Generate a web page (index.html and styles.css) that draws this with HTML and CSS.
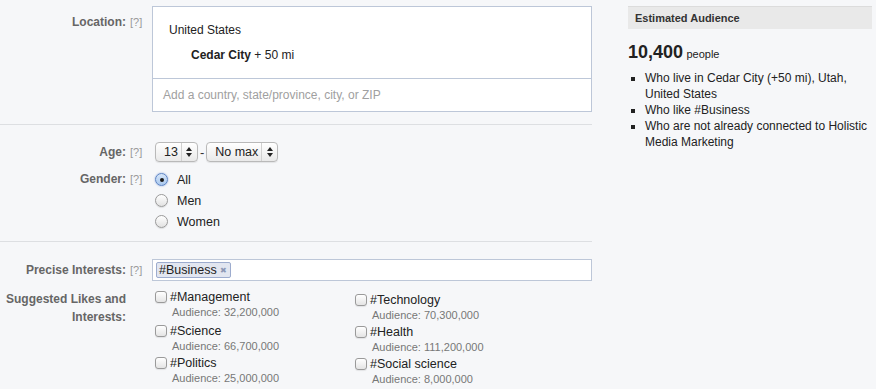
FILE: index.html
```html
<!DOCTYPE html>
<html lang="en">
<head>
  <meta charset="UTF-8" />
  <title>Audience Targeting</title>
  <link rel="stylesheet" href="styles.css">
</head>
<body>
  <div class="page">
    <div class="targeting">

      <!-- Location -->
      <div class="section section-location">
        <div class="row">
          <div class="label label-location">Location:</div>
          <div class="help help-location">[?]</div>
          <div class="control">
            <div class="location-box">
              <div class="location-list">
                <div class="country">United States</div>
                <div class="city"><b>Cedar City</b> + 50 mi</div>
              </div>
              <div class="location-add">Add a country, state/province, city, or ZIP</div>
            </div>
          </div>
        </div>
      </div>

      <!-- Age & Gender -->
      <div class="section section-demo">
        <div class="row row-age">
          <div class="label">Age:</div>
          <div class="help">[?]</div>
          <div class="control age-control">
            <span class="select">
              <span class="select-value">13</span>
              <span class="select-arrows"><svg width="6" height="10" viewBox="0 0 6 10"><path d="M3 0 L6 4 L0 4 Z M0 6 L6 6 L3 10 Z" fill="#222"/></svg></span>
            </span>
            <span class="dash">-</span>
            <span class="select">
              <span class="select-value">No max</span>
              <span class="select-arrows"><svg width="6" height="10" viewBox="0 0 6 10"><path d="M3 0 L6 4 L0 4 Z M0 6 L6 6 L3 10 Z" fill="#222"/></svg></span>
            </span>
          </div>
        </div>
        <div class="row row-gender">
          <div class="label">Gender:</div>
          <div class="help">[?]</div>
          <div class="control">
            <div class="radio-option"><span class="radio checked"></span>All</div>
            <div class="radio-option"><span class="radio"></span>Men</div>
            <div class="radio-option"><span class="radio"></span>Women</div>
          </div>
        </div>
      </div>

      <!-- Interests -->
      <div class="section section-interests">
        <div class="row row-precise">
          <div class="label">Precise Interests:</div>
          <div class="help">[?]</div>
          <div class="control">
            <div class="token-input">
              <span class="token">#Business <span class="token-x">&#x2716;</span></span>
            </div>
          </div>
        </div>
        <div class="row row-suggested">
          <div class="label label-suggested">Suggested Likes and Interests:</div>
          <div class="help"></div>
          <div class="control suggestions">
            <div class="sugg-col sugg-left">
              <div class="sugg first">
                <div class="sugg-title"><span class="checkbox"></span>#Management</div>
                <div class="sugg-audience">Audience: 32,200,000</div>
              </div>
              <div class="sugg">
                <div class="sugg-title"><span class="checkbox"></span>#Science</div>
                <div class="sugg-audience">Audience: 66,700,000</div>
              </div>
              <div class="sugg">
                <div class="sugg-title"><span class="checkbox"></span>#Politics</div>
                <div class="sugg-audience">Audience: 25,000,000</div>
              </div>
            </div>
            <div class="sugg-col sugg-right">
              <div class="sugg first">
                <div class="sugg-title"><span class="checkbox"></span>#Technology</div>
                <div class="sugg-audience">Audience: 70,300,000</div>
              </div>
              <div class="sugg">
                <div class="sugg-title"><span class="checkbox"></span>#Health</div>
                <div class="sugg-audience">Audience: 111,200,000</div>
              </div>
              <div class="sugg">
                <div class="sugg-title"><span class="checkbox"></span>#Social science</div>
                <div class="sugg-audience">Audience: 8,000,000</div>
              </div>
            </div>
          </div>
        </div>
      </div>

    </div>

    <!-- Estimated Audience -->
    <div class="audience">
      <div class="audience-header">Estimated Audience</div>
      <div class="audience-count"><span class="count">10,400</span> <span class="people">people</span></div>
      <ul class="audience-list">
        <li>Who live in Cedar City (+50 mi), Utah, United States</li>
        <li>Who like #Business</li>
        <li>Who are not already connected to Holistic Media Marketing</li>
      </ul>
    </div>
  </div>
</body>
</html>
```

FILE: styles.css
```css
html, body {
  margin: 0;
  padding: 0;
  height: 100%;
}

body {
  background-color: #f6f7f9;
  font-family: "Liberation Sans", Arial, sans-serif;
  font-size: 12px;
  color: #333;
  overflow: hidden;
}

.page {
  display: flex;
  align-items: flex-start;
}

.targeting {
  width: 592px;
  flex-shrink: 0;
}

.section {
  border-bottom: 1px solid #dddfe2;
}

.section-location {
  padding: 6px 0 12px;
}

.section-demo {
  padding: 17px 0 9px;
}

.section-interests {
  padding: 17px 0 10px;
  border-bottom: none;
}

.row {
  display: flex;
  align-items: flex-start;
}

.label {
  width: 126px;
  text-align: right;
  font-weight: bold;
  color: #666;
  line-height: 20px;
}

.help {
  width: 22px;
  padding-left: 4px;
  color: #999;
  font-size: 11px;
  line-height: 20px;
}

.label-location,
.help-location {
  padding-top: 6px;
}

.control {
  flex: 1;
}

/* Location box */
.location-box {
  background-color: #fff;
  border: 1px solid #bdc7d8;
}

.location-list {
  height: 72px;
  box-sizing: border-box;
  padding: 14px 16px 0;
  border-bottom: 1px solid #bdc7d8;
  line-height: 18px;
  color: #222;
}

.city {
  margin-top: 7px;
  padding-left: 22px;
}

.location-add {
  height: 32px;
  line-height: 32px;
  padding-left: 10px;
  color: #a0a0a0;
}

/* Age */
.age-control {
  display: flex;
  align-items: center;
  padding-left: 3px;
}

.select {
  display: inline-flex;
  align-items: center;
  height: 18px;
  border: 1px solid #b9b9b9;
  border-radius: 4px;
  background: linear-gradient(#ffffff, #e9e9e9);
  box-shadow: 0 1px 1px rgba(0, 0, 0, 0.08);
  font-size: 12.5px;
  color: #222;
}

.select-value {
  padding: 0 3px 0 8px;
  line-height: 18px;
}

.select-arrows {
  display: flex;
  align-items: center;
  justify-content: center;
  width: 15px;
  height: 18px;
  border-left: 1px solid #d0d0d0;
}

.dash {
  margin: 0 2px;
  font-size: 13px;
}

/* Gender */
.row-gender {
  margin-top: 7px;
}

.row-gender .label,
.row-gender .help {
  line-height: 21px;
}

.radio-option {
  display: flex;
  align-items: center;
  height: 21px;
  padding-left: 3px;
  font-size: 12.5px;
  color: #222;
}

.radio {
  width: 11px;
  height: 11px;
  margin-right: 9px;
  border: 1px solid #9a9a9a;
  border-radius: 50%;
  background: linear-gradient(#ffffff, #e2e2e2);
  box-shadow: 0 1px 1px rgba(0, 0, 0, 0.1);
  position: relative;
}

.radio.checked {
  border-color: #5d84c4;
  background: linear-gradient(#d7e6f8, #a9c8ee);
  box-shadow: 0 0 2px rgba(60, 110, 200, 0.6);
}

.radio.checked::after {
  content: "";
  position: absolute;
  left: 3.5px;
  top: 3.5px;
  width: 4px;
  height: 4px;
  border-radius: 50%;
  background-color: #1a1a1a;
}

/* Precise interests */
.row-precise .label,
.row-precise .help {
  line-height: 22px;
}

.token-input {
  height: 16px;
  padding: 2px 3px;
  background-color: #fff;
  border: 1px solid #bdc7d8;
}

.token {
  display: inline-block;
  height: 14px;
  line-height: 14px;
  padding: 0 3px 0 2px;
  border: 1px solid #9dacce;
  border-radius: 2px;
  background-color: #e2e6f0;
  font-size: 12.5px;
  color: #222;
}

.token-x {
  font-size: 8px;
  color: #8c98b5;
  vertical-align: 1px;
}

/* Suggestions */
.row-suggested {
  margin-top: 8px;
}

.label-suggested {
  line-height: 18px;
  padding-top: 1px;
}

.suggestions {
  display: flex;
  padding-left: 3px;
}

.sugg-col {
  width: 200px;
  display: flex;
  flex-direction: column;
  gap: 2px;
}

.sugg-left .first {
  margin-bottom: 2px;
}

.sugg-right {
  padding-top: 3px;
}

.sugg-title {
  display: flex;
  align-items: center;
  height: 16px;
  font-size: 12.5px;
  color: #222;
}

.checkbox {
  width: 10px;
  height: 10px;
  margin-right: 3px;
  border: 1px solid #9a9a9a;
  border-radius: 3px;
  background: linear-gradient(#ffffff, #e4e4e4);
  box-shadow: 0 1px 1px rgba(0, 0, 0, 0.08);
}

.sugg-audience {
  height: 14px;
  line-height: 14px;
  padding-left: 17px;
  font-size: 11px;
  color: #777;
}

/* Estimated audience */
.audience {
  width: 244px;
  margin-left: 36px;
  margin-top: 6px;
}

.audience-header {
  height: 22px;
  line-height: 22px;
  padding-left: 7px;
  border-top: 1px solid #dcdcdc;
  background-color: #e9e9e9;
  font-size: 11px;
  font-weight: bold;
  color: #333;
}

.audience-count {
  margin-top: 12px;
  line-height: 22px;
  color: #222;
}

.count {
  font-size: 18px;
  font-weight: bold;
}

.people {
  font-size: 11px;
}

.audience-list {
  margin: 5px 0 0;
  padding-left: 17px;
  list-style: square;
  line-height: 16px;
  color: #222;
}
```
